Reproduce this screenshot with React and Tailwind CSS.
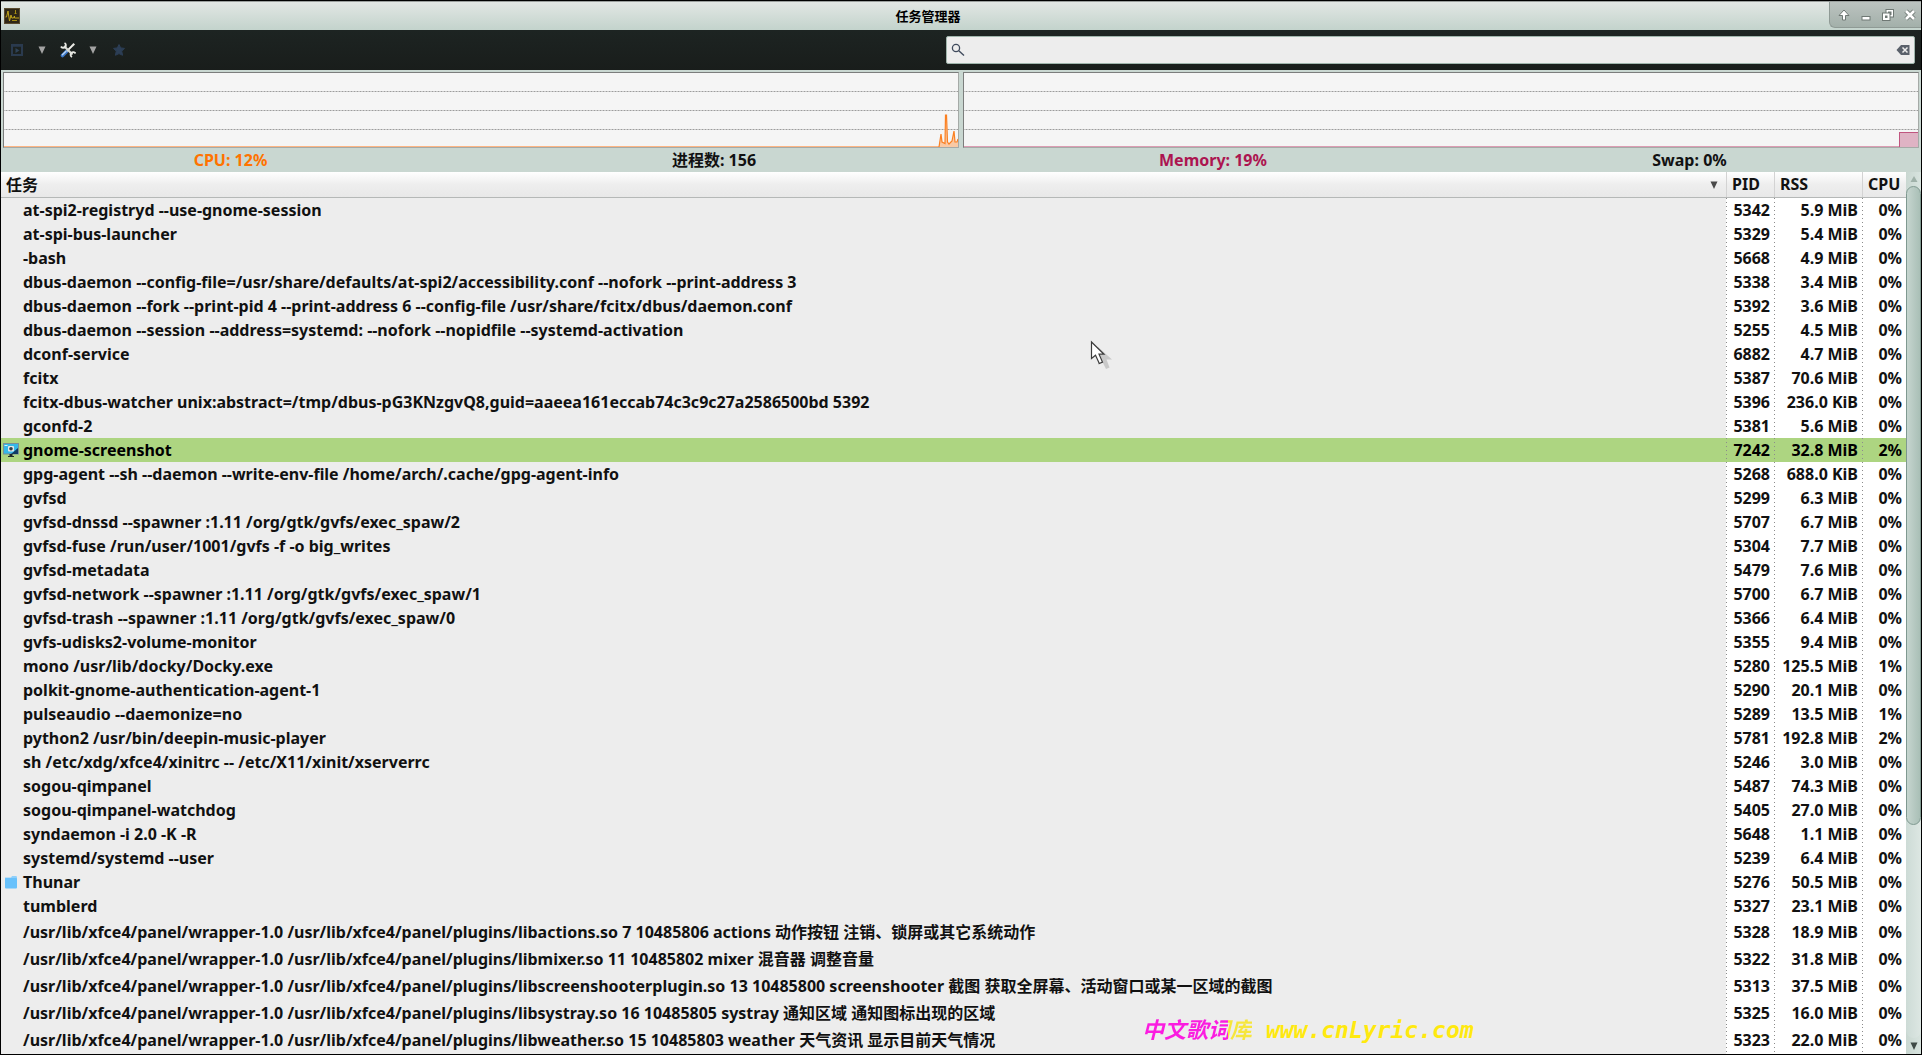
const processes = [
  { cmd: "at-spi2-registryd --use-gnome-session", pid: 5342, rss: "5.9 MiB", cpu: "0%" },
  { cmd: "at-spi-bus-launcher", pid: 5329, rss: "5.4 MiB", cpu: "0%" },
  { cmd: "-bash", pid: 5668, rss: "4.9 MiB", cpu: "0%" },
  { cmd: "dbus-daemon --config-file=/usr/share/defaults/at-spi2/accessibility.conf --nofork --print-address 3", pid: 5338, rss: "3.4 MiB", cpu: "0%" },
  { cmd: "dbus-daemon --fork --print-pid 4 --print-address 6 --config-file /usr/share/fcitx/dbus/daemon.conf", pid: 5392, rss: "3.6 MiB", cpu: "0%" },
  { cmd: "dbus-daemon --session --address=systemd: --nofork --nopidfile --systemd-activation", pid: 5255, rss: "4.5 MiB", cpu: "0%" },
  { cmd: "dconf-service", pid: 6882, rss: "4.7 MiB", cpu: "0%" },
  { cmd: "fcitx", pid: 5387, rss: "70.6 MiB", cpu: "0%" },
  { cmd: "fcitx-dbus-watcher unix:abstract=/tmp/dbus-pG3KNzgvQ8,guid=aaeea161eccab74c3c9c27a2586500bd 5392", pid: 5396, rss: "236.0 KiB", cpu: "0%" },
  { cmd: "gconfd-2", pid: 5381, rss: "5.6 MiB", cpu: "0%" },
  { cmd: "gnome-screenshot", icon: "screen", selected: true, pid: 7242, rss: "32.8 MiB", cpu: "2%" },
  { cmd: "gpg-agent --sh --daemon --write-env-file /home/arch/.cache/gpg-agent-info", pid: 5268, rss: "688.0 KiB", cpu: "0%" },
  { cmd: "gvfsd", pid: 5299, rss: "6.3 MiB", cpu: "0%" },
  { cmd: "gvfsd-dnssd --spawner :1.11 /org/gtk/gvfs/exec_spaw/2", pid: 5707, rss: "6.7 MiB", cpu: "0%" },
  { cmd: "gvfsd-fuse /run/user/1001/gvfs -f -o big_writes", pid: 5304, rss: "7.7 MiB", cpu: "0%" },
  { cmd: "gvfsd-metadata", pid: 5479, rss: "7.6 MiB", cpu: "0%" },
  { cmd: "gvfsd-network --spawner :1.11 /org/gtk/gvfs/exec_spaw/1", pid: 5700, rss: "6.7 MiB", cpu: "0%" },
  { cmd: "gvfsd-trash --spawner :1.11 /org/gtk/gvfs/exec_spaw/0", pid: 5366, rss: "6.4 MiB", cpu: "0%" },
  { cmd: "gvfs-udisks2-volume-monitor", pid: 5355, rss: "9.4 MiB", cpu: "0%" },
  { cmd: "mono /usr/lib/docky/Docky.exe", pid: 5280, rss: "125.5 MiB", cpu: "1%" },
  { cmd: "polkit-gnome-authentication-agent-1", pid: 5290, rss: "20.1 MiB", cpu: "0%" },
  { cmd: "pulseaudio --daemonize=no", pid: 5289, rss: "13.5 MiB", cpu: "1%" },
  { cmd: "python2 /usr/bin/deepin-music-player", pid: 5781, rss: "192.8 MiB", cpu: "2%" },
  { cmd: "sh /etc/xdg/xfce4/xinitrc -- /etc/X11/xinit/xserverrc", pid: 5246, rss: "3.0 MiB", cpu: "0%" },
  { cmd: "sogou-qimpanel", pid: 5487, rss: "74.3 MiB", cpu: "0%" },
  { cmd: "sogou-qimpanel-watchdog", pid: 5405, rss: "27.0 MiB", cpu: "0%" },
  { cmd: "syndaemon -i 2.0 -K -R", pid: 5648, rss: "1.1 MiB", cpu: "0%" },
  { cmd: "systemd/systemd --user", pid: 5239, rss: "6.4 MiB", cpu: "0%" },
  { cmd: "Thunar", icon: "folder", pid: 5276, rss: "50.5 MiB", cpu: "0%" },
  { cmd: "tumblerd", pid: 5327, rss: "23.1 MiB", cpu: "0%" },
  { cmd: "/usr/lib/xfce4/panel/wrapper-1.0 /usr/lib/xfce4/panel/plugins/libactions.so 7 10485806 actions", zh: "动作按钮 注销、锁屏或其它系统动作", pid: 5328, rss: "18.9 MiB", cpu: "0%" },
  { cmd: "/usr/lib/xfce4/panel/wrapper-1.0 /usr/lib/xfce4/panel/plugins/libmixer.so 11 10485802 mixer", zh: "混音器 调整音量", pid: 5322, rss: "31.8 MiB", cpu: "0%" },
  { cmd: "/usr/lib/xfce4/panel/wrapper-1.0 /usr/lib/xfce4/panel/plugins/libscreenshooterplugin.so 13 10485800 screenshooter", zh: "截图 获取全屏幕、活动窗口或某一区域的截图", pid: 5313, rss: "37.5 MiB", cpu: "0%" },
  { cmd: "/usr/lib/xfce4/panel/wrapper-1.0 /usr/lib/xfce4/panel/plugins/libsystray.so 16 10485805 systray", zh: "通知区域 通知图标出现的区域", pid: 5325, rss: "16.0 MiB", cpu: "0%" },
  { cmd: "/usr/lib/xfce4/panel/wrapper-1.0 /usr/lib/xfce4/panel/plugins/libweather.so 15 10485803 weather", zh: "天气资讯 显示目前天气情况", pid: 5323, rss: "22.0 MiB", cpu: "0%" },
];

function AppIcon() {
  return (
    <svg width="16" height="16" viewBox="0 0 16 16" aria-hidden="true">
      <rect width="16" height="16" fill="#2f2717" />
      <rect x="0.5" y="0.5" width="15" height="15" fill="none" stroke="#5a4c30" />
      <path d="M1.500 9h1l1.500-6 1.500 10 1.500-6 .8 3h1.700l1-2v2h4.500" fill="none" stroke="#c2a51a" />
      <path d="M11.500 2v4M10.500 5.500h2M8 12.500h5" fill="none" stroke="#a58c14" />
    </svg>
  );
}

function RunIcon() {
  return (
    <svg width="14" height="14" viewBox="0 0 14 14" aria-hidden="true">
      <path d="M2 2.500h10v9.500h-10z" fill="none" stroke="#2a3a4e" strokeWidth="2" />
      <path d="M1 1h12v2.500H1z" fill="#2a3a4e" />
      <path d="M5.500 5v5l4-2.500z" fill="#2f4358" />
    </svg>
  );
}

function ToolsIcon() {
  return (
    <svg width="16" height="16" viewBox="0 0 16 16" aria-hidden="true">
      <path d="M6.500 9.500l-4 4" stroke="#3b77c8" strokeWidth="3.600" strokeLinecap="round" />
      <path d="M6 9.200l-3.600 3.600" stroke="#b9d4f2" strokeWidth="1.400" strokeLinecap="round" />
      <path d="M7 9l5-5" stroke="#f2f2ee" strokeWidth="1.800" />
      <path d="M11 3.500L13.500 1l1.500 1.500L12.500 5z" fill="#e8e8e2" />
      <path d="M4 4l8.500 8.500" stroke="#d9dad4" strokeWidth="2.200" />
      <path d="M4.500 1a2.600 2.600 0 1 1-3.500 3.500" fill="none" stroke="#e8e9e3" strokeWidth="1.800" />
      <path d="M15.500 11.500a2.600 2.600 0 1 0-3.500 3.500" fill="none" stroke="#e8e9e3" strokeWidth="1.800" />
    </svg>
  );
}

function StarIcon() {
  return (
    <svg width="12" height="12" viewBox="0 0 12 12" aria-hidden="true">
      <path d="M6 .5l1.700 3.400 3.800.5-2.800 2.700.9 4.200L6 9.600l-3.600 1.700.9-4.200L.5 4.400l3.800-.5z" fill="#2c3e55" stroke="#2c3e55" />
    </svg>
  );
}

function Triangle({ className, up }) {
  return (
    <svg width="8" height="8" viewBox="0 0 8 8" className={className} aria-hidden="true">
      <path d={up ? "M4 1l3.500 6h-7z" : "M.5 .5h7L4 8z"} fill="currentColor" />
    </svg>
  );
}

function ScreenIcon() {
  return (
    <svg width="16" height="16" viewBox="0 0 16 16" aria-hidden="true">
      <rect x="0.500" y="1.500" width="15" height="10.500" fill="#35b8ea" stroke="#7a8f99" />
      <path d="M8 12l7-6v6z" fill="#123a63" />
      <path d="M1.500 3.500h3" stroke="#d6f1fb" />
      <rect x="5" y="4" width="6" height="5.500" rx="1" fill="#e3e8ea" />
      <circle cx="8" cy="6.800" r="1.800" fill="#31404a" />
      <path d="M6.500 12h3v2h1.500v1H5v-1h1.500z" fill="#20262a" />
    </svg>
  );
}

function FolderIcon() {
  return (
    <svg width="16" height="16" viewBox="0 0 16 16" aria-hidden="true">
      <path d="M2 3.500h6l1-1.500h4.500l.5 1.500v2H2z" fill="#8fd0fb" />
      <rect x="2" y="4" width="12" height="10.500" rx="1" fill="#68c1fb" />
    </svg>
  );
}

function Graph({ label, children }) {
  return (
    <div role="img" aria-label={label} className="relative flex h-[76px] flex-1 flex-col border border-t-[#7b7d7c] border-r-[#a5aaa7] border-b-[#a5aaa7] border-l-[#7b7d7c] bg-[#f5f5f5]">
      {[0, 1, 2].map((i) => (
        <div key={i} className="h-[19px] bg-[linear-gradient(90deg,#9c9c9c_2px,transparent_2px)] bg-[length:3px_1px] bg-bottom bg-repeat-x" />
      ))}
      {children}
    </div>
  );
}

const headCell =
  "h-[26px] border-b border-[#b5b8b7] bg-linear-to-b from-white from-0% via-[#eeeeee] via-50% to-[#e8e8e8] p-0 text-left font-bold";
const numCell =
  "bg-[linear-gradient(#8c8c8c_1px,transparent_1px)] bg-[length:1px_4px] bg-repeat-y p-0 pr-1 text-right whitespace-nowrap";

export default function App() {
  return (
    <div className="flex min-h-screen flex-col overflow-hidden border border-black bg-[#c9d7d1] font-['Noto_Sans','Noto_Sans_CJK_SC',sans-serif] text-base leading-6 font-bold text-[#111111]">
      <header className="flex h-[29px] items-center justify-between border-t border-[#9a9f9d] bg-linear-to-b from-[#e2e7e4] to-[#c3d3cc]">
        <div className="flex w-[26px] pl-[3px]">
          <AppIcon />
        </div>
        <h1 className="text-[13px] leading-5 text-black">任务管理器</h1>
        <div className="flex h-[26px] w-[92px] items-center justify-end self-start rounded-bl-md border-b border-l border-[#8f9a95] bg-linear-to-b from-[#bcc3c0] to-[#a3b0aa]">
          <button aria-label="收起" className="flex w-[22px] justify-center">
            <svg width="12" height="12" viewBox="0 0 12 12">
              <path d="M6 1L11 6.500H7.500v4.500h-3V6.500H1z" fill="#fff" stroke="#6f7874" />
            </svg>
          </button>
          <button aria-label="最小化" className="flex w-[22px] justify-center">
            <svg width="12" height="12" viewBox="0 0 12 12">
              <rect x="2" y="7.500" width="8" height="3.500" fill="#fff" stroke="#6f7874" />
            </svg>
          </button>
          <button aria-label="还原" className="flex w-[22px] justify-center">
            <svg width="12" height="12" viewBox="0 0 12 12">
              <path d="M3.500 0h8.500v8.500H8.500V12H0V3.500h3.500z" fill="#6f7874" />
              <path d="M4.500 3.500V1H11v6.500H8.500V6H9.500V2.500H6v1z" fill="#fff" />
              <path d="M1 4.500h6.500V11H1zM3 6.500V9h2.500V6.500z" fill="#fff" fillRule="evenodd" />
            </svg>
          </button>
          <button aria-label="关闭" className="flex w-[22px] justify-center">
            <svg width="12" height="12" viewBox="0 0 12 12">
              <path d="M2 2l8 8M10 2l-8 8" stroke="#6f7874" strokeWidth="4.500" />
              <path d="M2 2l8 8M10 2l-8 8" stroke="#fff" strokeWidth="2.600" />
            </svg>
          </button>
        </div>
      </header>

      <div className="flex h-10 items-center justify-between bg-linear-to-b from-[#1d2422] to-[#191d1b] pr-1.5 pl-[9px]">
        <div className="flex items-center">
          <button aria-label="启动任务" className="w-[28px]"><RunIcon /></button>
          <button aria-label="任务菜单" className="w-[22px] text-[#a3a3a3]"><Triangle /></button>
          <button aria-label="设置" className="w-[29px]"><ToolsIcon /></button>
          <button aria-label="设置菜单" className="w-[24px] text-[#a3a3a3]"><Triangle /></button>
          <button aria-label="收藏"><StarIcon /></button>
        </div>
        <div className="flex h-7 w-[969px] items-center gap-1 rounded-xs border border-[#9fb5ac] bg-[#ededed] px-1">
          <svg width="14" height="14" viewBox="0 0 14 14" aria-hidden="true">
            <circle cx="5" cy="5" r="3.600" fill="none" stroke="#3f4a5c" strokeWidth="1.300" />
            <path d="M7.800 7.800L13 12.500" stroke="#3f4a5c" strokeWidth="1.400" />
          </svg>
          <input aria-label="搜索" className="min-w-0 flex-1 bg-transparent outline-none" />
          <button aria-label="清除">
            <svg width="14" height="10" viewBox="0 0 14 10">
              <path d="M5 0h8.500v10H5L.5 5z" fill="#5a616b" />
              <path d="M6.500 2.500l5 5M11.500 2.500l-5 5" stroke="#ededed" strokeWidth="1.500" />
            </svg>
          </button>
        </div>
      </div>

      <section className="flex gap-1 px-0.5 pt-0.5">
        <Graph label="CPU 使用率">
          <div className="flex-1 border-b border-[#fdb583]" />
          <svg width="20" height="34" viewBox="0 0 20 34" className="absolute right-0 bottom-0" aria-hidden="true">
            <path d="M1 34L3 21l1 8 3 1.500L7.500 2h1l1 27 1.500 2 3-3 2-10 1 11h2l1-3v8z" fill="#f9c9a4" />
            <path d="M1 34L3 21l1 8 3 1.500L7.500 2h1l1 27 1.500 2 3-3 2-10 1 11h2l1-3" fill="none" stroke="#fb7f20" strokeWidth="1.200" />
          </svg>
        </Graph>
        <Graph label="内存使用率">
          <div className="flex-1 border-b border-[#dc9db3]" />
          <div className="absolute right-0 bottom-0 h-[15px] w-[19px] border border-r-0 border-b-0 border-[#c0557f] bg-[#dfb3c4]" />
        </Graph>
      </section>
      <div className="grid h-6 grid-cols-[459fr_508fr_490fr_463fr] text-center">
        <span className="text-[#ff7300]">CPU: 12%</span>
        <span>进程数: 156</span>
        <span className="text-[#ac1550]">Memory: 19%</span>
        <span>Swap: 0%</span>
      </div>

      <main className="flex flex-1">
        <table className="flex-1 table-fixed border-separate border-spacing-0 bg-white">
          <colgroup>
            <col />
            <col className="w-12" />
            <col className="w-[88px]" />
            <col className="w-11" />
          </colgroup>
          <thead>
            <tr>
              <th className={headCell}>
                <div className="flex items-center justify-between pr-2 pl-[5px]">
                  任务 <Triangle className="text-[#4a4a4a]" />
                </div>
              </th>
              <th className={headCell}><div className="h-[25px] border-l border-[#d3d3d3] pl-[5px]">PID</div></th>
              <th className={headCell}><div className="h-[25px] border-l border-[#d3d3d3] pl-[5px]">RSS</div></th>
              <th className={headCell}><div className="h-[25px] border-l border-[#d3d3d3] pl-[5px]">CPU</div></th>
            </tr>
          </thead>
          <tbody>
            {processes.map((p) => (
              <tr key={p.pid} className={p.selected ? "bg-[#add581] text-black" : ""}>
                <td className={p.selected ? "p-0" : "bg-[#ededed] p-0"}>
                  <div className={p.zh ? "flex h-[27px] items-center" : "flex h-6 items-center"}>
                    <span className="w-[22px] shrink-0 pl-0.5">
                      {p.icon === "screen" && <ScreenIcon />}
                      {p.icon === "folder" && <FolderIcon />}
                    </span>
                    <span className="whitespace-nowrap">
                      {p.cmd}
                      {p.zh && " " + p.zh}
                    </span>
                  </div>
                </td>
                <td className={numCell}>{p.pid}</td>
                <td className={numCell}>{p.rss}</td>
                <td className={numCell}>{p.cpu}</td>
              </tr>
            ))}
          </tbody>
        </table>
        <div className="flex w-[15px] flex-col items-center bg-linear-to-r from-[#c9d7d1] to-[#d8e4df]">
          <Triangle up className="my-[3px] text-[#9fb1a9]" />
          <div className="w-full flex-1 rounded-full bg-linear-to-r from-[#cddbd6] to-[#dde7e3]">
            <div className="h-[75%] rounded-full border border-[#7f9990] bg-linear-to-r from-[#c6d5cf] to-[#a9bfb6]" />
          </div>
          <Triangle className="my-1 text-[#3f4a46]" />
        </div>
      </main>

      <svg width="24" height="32" viewBox="0 0 24 32" className="absolute top-[340px] left-[1090px]" aria-hidden="true">
        <path d="M8 7v18l4-4 4 8 3.500-1.500-3-8H22z" fill="#c9c9c9" />
        <path d="M1.500 2v16.500l4-3.300 3.800 8.300 3.200-1.400L9 14.200h5z" fill="#fff" stroke="#3c3c3c" strokeWidth="1.200" />
      </svg>

      <p className="absolute top-[1014px] left-[1142px] font-['DejaVu_Sans_Mono','Noto_Sans_CJK_SC',monospace] text-[23px] leading-8 font-bold whitespace-nowrap text-[#ffe90f] italic">
        <span className="bg-linear-to-r from-[#fb1ce0] from-78% to-[#f6e63c] to-78% bg-clip-text text-[22px] text-transparent">中文歌词库</span>{" "}
        www.cnLyric.com
      </p>
    </div>
  );
}
